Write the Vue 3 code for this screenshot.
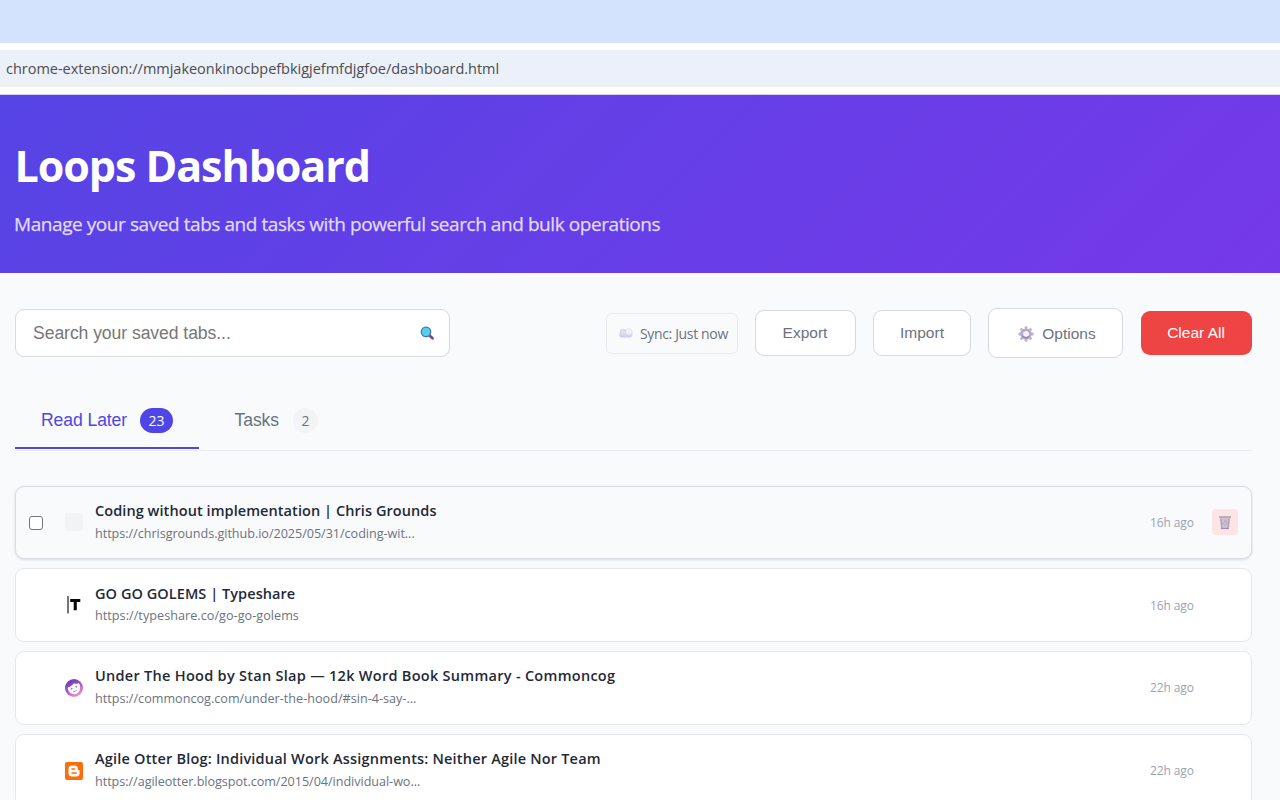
<script setup>
const rows = [
  { title: 'Coding without implementation | Chris Grounds', url: 'https://chrisgrounds.github.io/2025/05/31/coding-wit...', time: '16h ago', icon: 'blank', hover: true, ts: 0.07, us: -0.03 },
  { title: 'GO GO GOLEMS | Typeshare', url: 'https://typeshare.co/go-go-golems', time: '16h ago', icon: 'typeshare', ts: 0.06, us: 0.05 },
  { title: 'Under The Hood by Stan Slap — 12k Word Book Summary - Commoncog', url: 'https://commoncog.com/under-the-hood/#sin-4-say-...', time: '22h ago', icon: 'commoncog', ts: 0.285, us: 0.02 },
  { title: 'Agile Otter Blog: Individual Work Assignments: Neither Agile Nor Team', url: 'https://agileotter.blogspot.com/2015/04/individual-wo...', time: '22h ago', icon: 'blogger', ts: 0.2, us: -0.035 }
]
const teeth = [0, 45, 90, 135, 180, 225, 270, 315]
</script>

<template>
  <div class="page">
    <div class="tabstrip"></div>
    <div class="toolbar"><div class="address"><span>chrome-extension://mmjakeonkinocbpefbkigjefmfdjgfoe/dashboard.html</span></div></div>
    <header class="hero">
      <h1><span>Loops Dashboard</span></h1>
      <p><span>Manage your saved tabs and tasks with powerful search and bulk operations</span></p>
    </header>
    <main>
      <div class="controls">
        <div class="search">
          <span class="ph">Search your saved tabs...</span>
          <svg width="15" height="15" viewBox="0 0 15 15">
            <path d="M9.2 9.2 L12.5 12.2" stroke="#86458b" stroke-width="2.8" stroke-linecap="round" />
            <circle cx="6" cy="5.9" r="4.7" fill="#5bcbee" stroke="#3f78b0" stroke-width="1.3" />
          </svg>
        </div>
        <div class="actions">
          <div class="sync">
            <svg width="16" height="12" viewBox="0 0 16 12">
              <defs>
                <linearGradient id="cloud" x1="0" y1="0" x2="0" y2="1">
                  <stop offset="0" stop-color="#eeedf3" /><stop offset="1" stop-color="#cfc5ef" />
                </linearGradient>
              </defs>
              <circle cx="10.6" cy="5.2" r="4" fill="#e4e1ef" />
              <rect x="1" y="4.6" width="13.6" height="6" rx="3" fill="url(#cloud)" />
              <circle cx="5" cy="5" r="2.9" fill="#e3e1e9" stroke="#d0cddb" stroke-width=".6" />
              <circle cx="10.8" cy="4.4" r="2.8" fill="#f1f0f5" />
            </svg>
            <span>Sync: Just now</span>
          </div>
          <button class="btn export">Export</button>
          <button class="btn import">Import</button>
          <button class="btn options">
            <svg width="16" height="16" viewBox="0 0 16 16">
              <rect v-for="a in teeth" :key="a" x="6.6" y=".3" width="2.8" height="4" rx=".8" fill="#c0b5d3" :transform="`rotate(${a} 8 8)`" />
              <circle cx="8" cy="8" r="4.2" fill="none" stroke="#b5a9c8" stroke-width="2.8" />
              <path d="M4.4 9.7A4.2 4.2 0 0 0 11 10.5" fill="none" stroke="#9487aa" stroke-width="1.3" />
              <circle cx="8.4" cy="7.8" r="2.5" fill="#f3f0f7" />
            </svg>
            <span>Options</span>
          </button>
          <button class="btn clear">Clear All</button>
        </div>
      </div>
      <nav>
        <div class="tab active"><span class="label">Read Later</span><span class="badge">23</span></div>
        <div class="tab"><span class="label">Tasks</span><span class="badge">2</span></div>
      </nav>
      <section class="list">
        <article v-for="r in rows" :key="r.title" class="card" :class="{ hover: r.hover }">
          <span class="check"></span>
          <svg class="fav" width="18" height="18" viewBox="0 0 18 18">
            <rect v-if="r.icon === 'blank'" width="18" height="18" rx="3" fill="#f2f3f5" />
            <g v-else-if="r.icon === 'typeshare'">
              <path d="M3 0V17.5" stroke="#555" stroke-width="1.6" />
              <path d="M5.2 3H15.3V5.9H11.8V14.3H8.7V5.9H5.2Z" fill="#080808" />
            </g>
            <g v-else-if="r.icon === 'commoncog'">
              <defs>
                <linearGradient id="cog" x1=".2" y1="0" x2=".75" y2="1">
                  <stop offset="0" stop-color="#6235bd" /><stop offset=".5" stop-color="#a755c6" /><stop offset="1" stop-color="#f2a0c3" />
                </linearGradient>
              </defs>
              <circle cx="9" cy="9" r="9" fill="url(#cog)" />
              <path d="M2.7 8.5C5 7.8 7.2 6.3 9 4.2C10.7 5.2 12.5 4.9 13.6 3.9C15.8 6 15.8 10.8 13.5 13.2C10.8 16 6.6 15.6 4.3 13C3.2 11.8 2.7 10 2.7 8.5Z" fill="#fff" />
              <circle cx="6.6" cy="9.8" r="1" fill="#b878d4" /><circle cx="11.4" cy="7.8" r="1" fill="#b878d4" />
              <path d="M8 12.8Q10.5 12.8 11.8 11" fill="none" stroke="#d884c4" stroke-width="1" />
            </g>
            <g v-else>
              <rect width="18" height="18" rx="2" fill="#ff6d0a" />
              <path d="M7 3.5H9.5A3.3 3.3 0 0 1 12.8 6.8C12.8 7.7 13 8 13.7 8C14.3 8 14.6 8.3 14.6 8.9V11A3.5 3.5 0 0 1 11.1 14.5H7A3.5 3.5 0 0 1 3.5 11V7A3.5 3.5 0 0 1 7 3.5Z" fill="#fff" />
              <path d="M7 6.9H9.4M7 11.1H11.2" stroke="#ff6d0a" stroke-width="1.5" stroke-linecap="round" />
            </g>
          </svg>
          <div class="text">
            <div class="title"><span :style="{ letterSpacing: r.ts + 'px' }">{{ r.title }}</span></div>
            <div class="url"><span :style="{ letterSpacing: r.us + 'px' }">{{ r.url }}</span></div>
          </div>
          <span class="time">{{ r.time }}</span>
          <span class="trash">
            <svg v-if="r.hover" width="14" height="15" viewBox="0 0 14 15">
              <path d="M1.5 2H12.5L11 14H3Z" fill="#cfc3d3" />
              <path d="M1 2H13M3 4L4 13M11 4L10 13" stroke="#aaa1b6" stroke-width="1.3" />
              <path d="M6 4.5L9 8L6 11M9 4.5L5 9" fill="none" stroke="#a99fb7" stroke-width=".8" />
              <path d="M3 13.5H11" stroke="#9e91aa" stroke-width="1.2" />
            </svg>
          </span>
        </article>
      </section>
    </main>
  </div>
</template>

<style>
body { margin: 0; overflow: hidden; }
</style>

<style scoped>
.page { width: 1280px; height: 800px; overflow: hidden; background: #f9fafc; font-family: "Open Sans", "Noto Sans", sans-serif; color: #1f2937; }
.page * { box-sizing: border-box; }
.page span { white-space: nowrap; }
.tabstrip { height: 43px; background: #d3e3fd; }
.toolbar { height: 52px; padding: 7px 0 8px; background: #fff; border-bottom: 1px solid #d5cff5; }
.address { height: 37px; background: #ecf0f9; padding-left: 6px; line-height: 38px; font-size: 14.5px; letter-spacing: -.02px; color: #4b4d50; }
.hero { height: 178px; padding: 41px 15px 0; background: linear-gradient(135deg, #5644e5 0%, #7539e9 100%); color: #fff; }
h1 { margin: 0 0 0 -.5px; font-size: 43px; font-weight: 700; line-height: 60px; letter-spacing: -1.06px; }
.hero p { margin: 14px 0 0 -1px; font-size: 19px; line-height: 28px; letter-spacing: -.43px; color: #e1dbfa; -webkit-text-stroke: .25px #e1dbfa; }
main { padding: 35px 28px 0 15px; }
.controls { display: flex; justify-content: space-between; align-items: center; height: 50px; }
.search { width: 435.4px; height: 48px; border: 1.5px solid #d6d9e0; border-radius: 9px; background: #fff; display: flex; align-items: center; justify-content: space-between; padding: 0 14px 0 17px; font: 17.6px "Liberation Sans", sans-serif; letter-spacing: -.07px; color: #777; }
.actions { display: flex; align-items: center; }
.sync { width: 132px; height: 41px; margin-right: 17px; border: 1.5px solid #eaecef; border-radius: 6px; display: flex; align-items: center; padding-left: 11px; gap: 6px; font-size: 14px; letter-spacing: -.35px; color: #6b7280; }
.btn { height: 46px; padding: 0; border: 1.5px solid #d6d9e0; border-radius: 9px; background: #fff; color: #6b7280; font: 15.5px "Liberation Sans", sans-serif; display: flex; align-items: center; justify-content: center; }
.export { width: 101px; margin-right: 17px; padding-right: 1px; }
.import { width: 98px; margin-right: 17px; }
.options { width: 135px; height: 50px; gap: 8px; margin-right: 18px; padding: 2px 0 0 3px; }
.clear { width: 111px; height: 44px; border: 0; background: #ef4444; color: #fff; padding-right: 1px; }
nav { display: flex; margin-top: 35px; height: 57.5px; border-bottom: 1.5px solid #e9ebee; }
.tab { display: flex; height: 57px; padding: 0 26px 3px; align-items: center; gap: 14px; color: #6b7280; font: 17.6px "Liberation Sans", sans-serif; letter-spacing: -.1px; }
.tab.active { width: 184px; height: 56px; color: #5046e5; border-bottom: 2px solid #4f46e5; gap: 13px; padding-bottom: 0; margin-right: 9.5px; }
.badge { height: 25px; min-width: 25px; padding: 0 8.5px; border-radius: 13px; background: #f2f4f6; font: 14px/25px "Open Sans", sans-serif; text-align: center; margin-top: 1px; }
.active .badge { background: #4f46e5; color: #fff; }
.list { display: flex; flex-direction: column; gap: 9.3px; margin-top: 35px; }
.card { height: 73.5px; border: 1px solid #e5e7eb; border-radius: 9px; background: #fff; display: flex; align-items: center; padding: 0 13px; flex: none; }
.card.hover { background: #f9fafb; border: 1.5px solid #d9dce2; box-shadow: 0 1px 3px rgba(0, 0, 0, .12); }
.check { width: 14px; height: 14px; margin: 1px 22px 0 0; border-radius: 3px; visibility: hidden; }
.hover .check { visibility: visible; border: 1.3px solid #767676; background: #fff; }
.fav { margin-right: 12px; flex: none; }
.text { flex: 1; }
.title { font-size: 14.5px; line-height: 22px; margin-top: -1px; font-weight: 600; }
.url { font-size: 12.6px; line-height: 20px; margin-top: 1.8px; color: #6b7280; }
.time { width: 61.5px; font-size: 12px; letter-spacing: -.1px; color: #9ca3af; }
.trash { width: 26px; height: 26px; margin-right: .5px; border-radius: 4px; display: flex; align-items: center; justify-content: center; }
.hover .trash { background: #fee4e4; }
</style>
